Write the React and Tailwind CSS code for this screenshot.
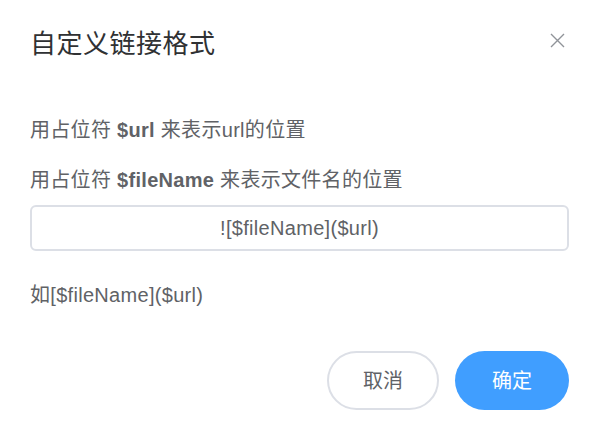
import React, { useState } from 'react';

const fontStack = { fontFamily: '"Liberation Sans", "Noto Sans CJK SC", sans-serif' };

const LinkFormatDialog = () => {
    const [format, setFormat] = useState('![$fileName]($url)');

    return (
        <div className="relative w-[593px] h-[436px] bg-white pl-[30px] pr-[24px]" style={fontStack}>
            {/* --- Header --- */}
            <div className="pt-[26px] h-[62px]">
                <h2 className="text-[26px] leading-[36px] text-[#303133] tracking-[0.5px]">自定义链接格式</h2>
            </div>
            <button className="absolute top-[31px] right-[27px] w-[18px] h-[18px] flex items-center justify-center text-[#909399]">
                <svg width="15" height="15" viewBox="0 0 15 15" fill="none" stroke="currentColor" strokeWidth="1.4">
                    <path d="M1 1L14 14M14 1L1 14" />
                </svg>
            </button>

            {/* --- Body --- */}
            <div className="pt-[53px] text-[20px] text-[#606266] tracking-[0.3px]">
                <p className="leading-[30px]">用占位符 <b className="font-bold">$url</b> 来表示url的位置</p>
                <p className="leading-[30px] mt-[20px]">用占位符 <b className="font-bold">$fileName</b> 来表示文件名的位置</p>
                <input
                    value={format}
                    onChange={e => setFormat(e.target.value)}
                    className="mt-[10px] block w-full h-[46px] rounded-[6px] border-2 border-[#dcdfe6] text-center text-[20px] text-[#606266] outline-none"
                    style={fontStack}
                />
                <p className="leading-[30px] mt-[29px]">如[$fileName]($url)</p>
            </div>

            {/* --- Footer --- */}
            <div className="flex justify-end gap-[16px] mt-[41px]">
                <button className="w-[112px] h-[59px] rounded-full border-2 border-[#dcdfe6] bg-white text-[20px] text-[#606266]">取消</button>
                <button className="w-[114px] h-[59px] rounded-full bg-[#409eff] text-[20px] text-white">确定</button>
            </div>
        </div>
    );
};

export default function App() {
    return <LinkFormatDialog />;
}
